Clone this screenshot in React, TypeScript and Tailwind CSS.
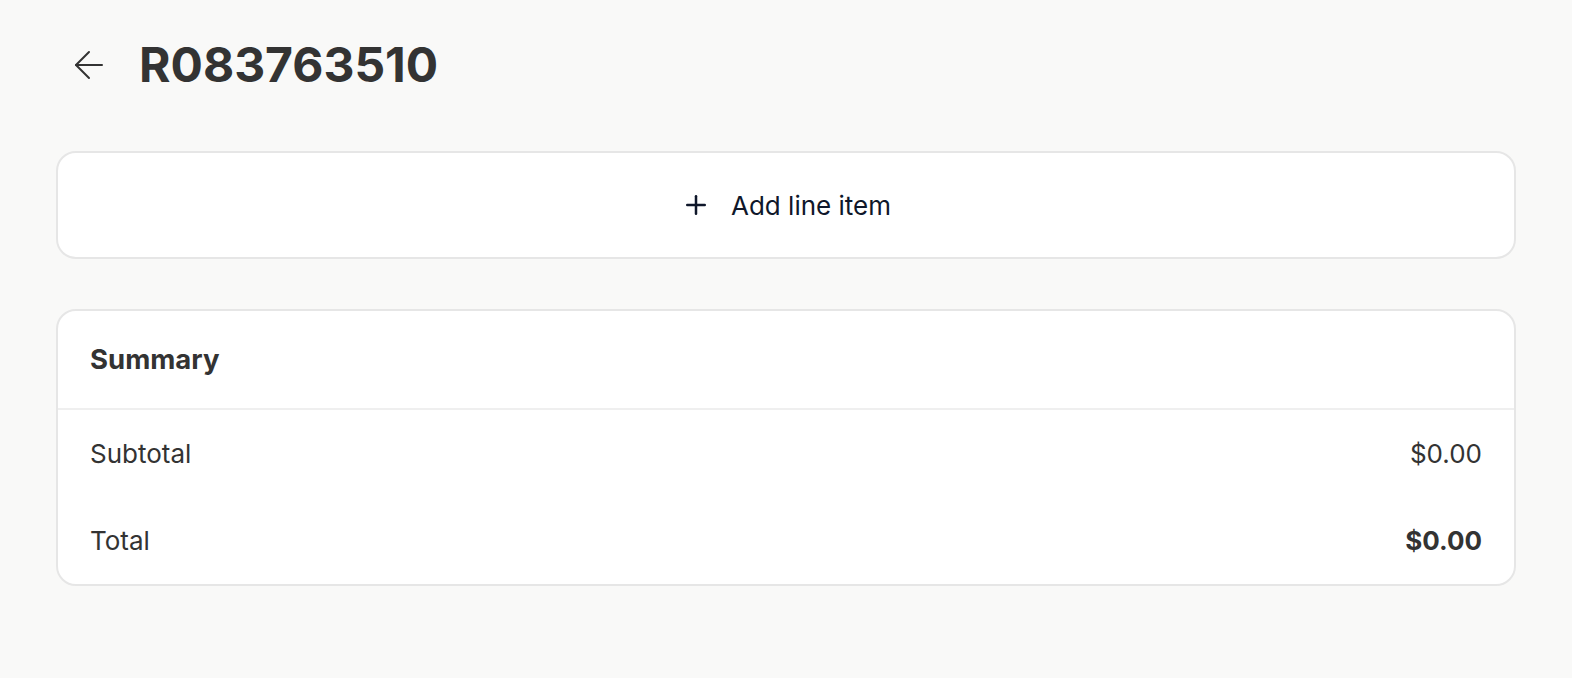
import { Plus } from "lucide-react";

const BackArrow = () => (
  <svg width="30" height="30" viewBox="0 0 30 30" fill="none" stroke="currentColor" strokeWidth="2" strokeLinecap="round" strokeLinejoin="round">
    <path d="M28 15H2" />
    <path d="M15 2 2 15l13 13" />
  </svg>
);

const SummaryRow = ({ label, value, bold }: { label: string; value: string; bold?: boolean }) => (
  <div className="flex h-[87px] items-center justify-between px-8">
    <span className="text-[26px]">{label}</span>
    <span className={bold ? "text-[26px] font-bold" : "text-[26px]"}>{value}</span>
  </div>
);

export default function App() {
  return (
    <div className="min-h-screen bg-[#f9f9f8] px-14 pt-[28px] text-[#333333] font-['Inter','Noto_Sans',sans-serif]">
      <div className="flex h-[74px] items-center gap-[35px] pl-[18px]">
        <BackArrow />
        <h1 className="text-[48px] font-bold leading-none">R083763510</h1>
      </div>

      <div className="mt-[49px] flex h-[108px] items-center justify-center gap-5 rounded-[20px] border-2 border-[#e6e6e6] bg-white text-[#0f172a]">
        <Plus size={30} strokeWidth={2} />
        <span className="text-[26px]">Add line item</span>
      </div>

      <div className="mt-[50px] rounded-[20px] border-2 border-[#e6e6e6] bg-white">
        <div className="flex h-[99px] items-center border-b-2 border-[#efefef] px-8">
          <h2 className="text-[27.5px] font-bold">Summary</h2>
        </div>
        <SummaryRow label="Subtotal" value="$0.00" />
        <SummaryRow label="Total" value="$0.00" bold />
      </div>
    </div>
  );
}
